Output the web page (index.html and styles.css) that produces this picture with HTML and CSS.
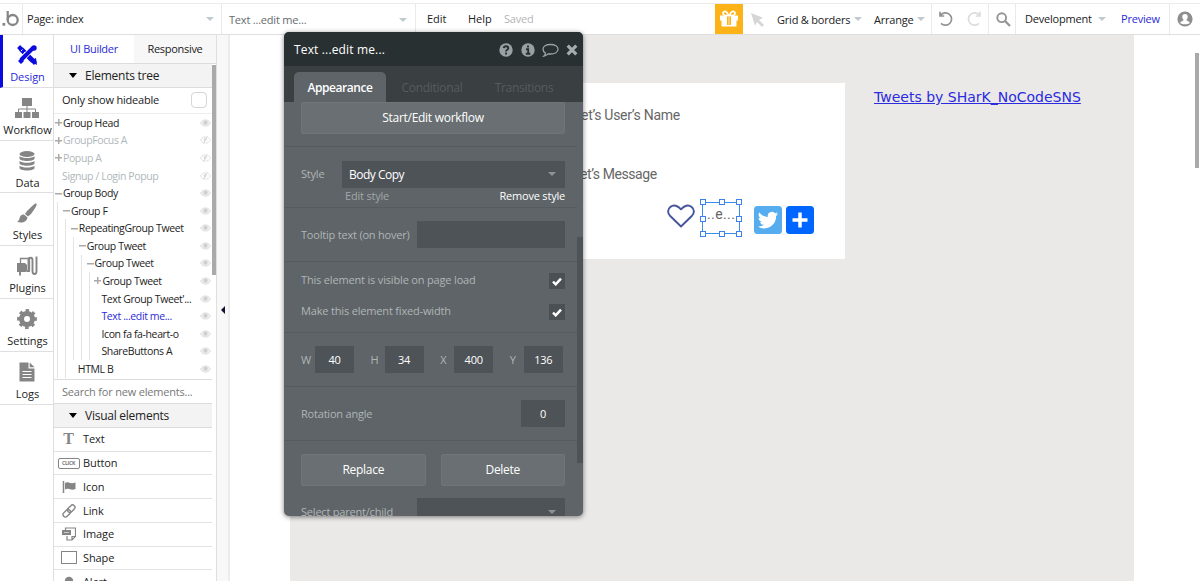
FILE: index.html
```html
<!DOCTYPE html>
<html lang="en">
<head>
<meta charset="utf-8">
<title>Editor</title>
<link rel="stylesheet" href="styles.css">
</head>
<body>
<svg class="defs" width="0" height="0">
  <symbol id="eye" viewBox="0 0 12 8"><path d="M.5 4C2 1.600 3.800.6 6 .6S10 1.600 11.500 4C10 6.400 8.200 7.400 6 7.400S2 6.400.5 4Z" fill="#eee" stroke="#dedede"/><circle cx="6" cy="3.700" r="2.300" fill="#cfcfcf"/></symbol>
  <symbol id="eye-off" viewBox="0 0 12 8"><path d="M.5 4C2 1.600 3.800.6 6 .6S10 1.600 11.500 4C10 6.400 8.200 7.400 6 7.400S2 6.400.5 4Z" fill="none" stroke="#ddd"/><circle cx="6" cy="3.700" r="2" fill="#d4d4d4"/><path d="M8.500 0l-4 8" stroke="#fff" stroke-width="2"/><path d="M8 0l-4 8" stroke="#ccc"/></symbol>
  <symbol id="check" viewBox="0 0 10 9"><path d="M1 4.700 3.700 7.300 9 1.600" fill="none" stroke="#fff" stroke-width="2.500"/></symbol>
</svg>
<div class="app">
  <header class="topbar">
    <div class="cell logo"><svg width="18" height="18" viewBox="0 0 18 18"><rect x=".5" y="13" width="2.700" height="2.700" fill="#858585"/><path d="M5.700 1v9" stroke="#858585" stroke-width="2.200"/><circle cx="10.700" cy="10" r="5" fill="none" stroke="#858585" stroke-width="2.300"/></svg></div>
    <div class="cell page-select"><span>Page: index</span><i class="caret"></i></div>
    <div class="cell element-select"><span>Text ...edit me...</span><i class="caret"></i></div>
    <nav class="menu"><span class="m-edit">Edit</span><span class="m-help">Help</span><span class="m-saved">Saved</span></nav>
    <div class="gift"><svg width="20" height="18" viewBox="0 0 20 18" fill="#fff"><path d="M1 5.500h18v5H1zM2.500 10h15V16.500h-15z"/><path d="M9.500 5.500C5 6 3.500 4.200 4.200 2.500 5.200.5 8 1 9.500 5.500ZM10.500 5.500c4.500.5 6-1.300 5.300-3C14.800.5 12 1 10.500 5.500Z" fill="none" stroke="#fff" stroke-width="1.700"/><path d="M8 6.500h4v8.500H8z" fill="#fbb318"/><path d="M9.200 6.500h1.600v8.500H9.200z" fill="#fdd27a"/></svg></div>
    <svg class="pointer" width="13" height="14" viewBox="0 0 13 14"><path d="M0 0l12 4.700-4 2.300 5 5-2 2-5-5-2 3.700z" fill="#d6d6d6"/></svg>
    <span class="m-grid">Grid &amp; borders</span><i class="caret"></i>
    <span class="m-arrange">Arrange</span><i class="caret"></i>
    <div class="cell history">
      <svg width="16" height="16" viewBox="0 0 16 16" fill="none" stroke="#929292" stroke-width="1.700"><path d="M2.500 4.200A6.200 6.200 0 1 1 3 12.400M2 .8v4.200h4.200"/></svg>
      <svg width="16" height="16" viewBox="0 0 16 16" fill="none" stroke="#dcdcdc" stroke-width="1.700"><path d="M13.500 4.200A6.200 6.200 0 1 0 13 12.400M14 .8v4.200H9.800"/></svg>
    </div>
    <div class="cell search"><svg width="15" height="15" viewBox="0 0 15 15" fill="none" stroke="#949494"><circle cx="5.700" cy="5.700" r="4.400" stroke-width="1.900"/><path d="M9 9l5 5" stroke-width="2.300"/></svg></div>
    <div class="cell version"><span class="m-dev">Development</span><i class="caret"></i><a class="preview">Preview</a></div>
    <div class="user"><svg width="16" height="16" viewBox="0 0 16 16"><circle cx="8" cy="8" r="7.600" fill="#8e8e8e"/><path d="M8 3c1.800 0 2.900 1.200 2.700 3-.1 1.300-.6 2.200-1.300 2.800.2 1.400 3 1.200 3.400 3.200C11 13.700 5 13.700 3.200 12c.4-2 3.200-1.800 3.400-3.200C5.900 8.200 5.400 7.300 5.300 6 5.100 4.200 6.200 3 8 3Z" fill="#fff"/></svg></div>
  </header>

  <div class="workspace">
    <nav class="rail">
      <div class="rail-item active"><svg width="22" height="22" viewBox="0 0 22 22"><path d="M5 5l12 12" stroke="#0b0bdf" stroke-width="5"/><path d="M16.500 4.500 5 16" stroke="#fff" stroke-width="5.500"/><path d="M17 4 5 16" stroke="#0b0bdf" stroke-width="4"/><path d="M2.500 5.500 5.500 2.500M16.500 19.500 19.500 16.500" stroke="#0b0bdf" stroke-width="4"/><path d="M14 17l6-3 1 7zM2 17l3-3 3 3-3 3z" fill="#0b0bdf"/><path d="M5 7l1.500-1.500M7.500 9.500 9 8" stroke="#fff"/><circle cx="18" cy="4" r="2.700" fill="#0b0bdf"/></svg><span>Design</span></div>
      <div class="rail-item"><svg width="24" height="22" viewBox="0 0 24 22" fill="#858585"><path d="M7 1h10v8H7zM0 15h7v6H0zM8.500 15h7v6h-7zM17 15h7v6h-7z"/><path d="M3.500 15v-3h17v3M12 8v7" fill="none" stroke="#858585"/></svg><span>Workflow</span></div>
      <div class="rail-item"><svg width="18" height="22" viewBox="0 0 18 22" fill="#858585"><ellipse cx="9" cy="4" rx="7.500" ry="3"/><path d="M1.500 6.200c3 2.400 12 2.400 15 0v2.500c-1 3-14 3-15 0zM1.500 11c3 2.400 12 2.400 15 0v2.500c-1 3-14 3-15 0zM1.500 15.700c3 2.400 12 2.400 15 0v2.500c-1 3-14 3-15 0z"/></svg><span>Data</span></div>
      <div class="rail-item"><svg width="22" height="22" viewBox="0 0 22 22" fill="#858585"><path d="M20 1.500c1.500.8 1 2-5 10.500l-3 2.500-3-2.500 2-3C18 2.500 19 1.200 20 1.500ZM8.300 12.700l3.200 2.700c-.5 4-5 6.200-10.500 4.300 3-1 2-5 4.200-6.500 1-.7 2-.8 3.100-.5Z"/></svg><span>Styles</span></div>
      <div class="rail-item"><svg width="22" height="22" viewBox="0 0 22 22"><path d="M4.500 3.500h9V16h-9z" fill="none" stroke="#858585" stroke-width="1.300"/><path d="M1 8h8l2 2v5l-2 2H1z" fill="#858585"/><path d="M11 16h1.500V5c0-3 4-3 4 0v11c0 4 4 4 4 0V1.500M4 17v3.500" fill="none" stroke="#858585" stroke-width="1.900"/></svg><span>Plugins</span></div>
      <div class="rail-item"><svg width="22" height="22" viewBox="0 0 22 22"><circle cx="11" cy="11" r="5.500" fill="none" stroke="#858585" stroke-width="5"/><circle cx="11" cy="11" r="8.400" fill="none" stroke="#858585" stroke-width="3" stroke-dasharray="3.300 3.298" transform="rotate(-11 11 11)"/></svg><span>Settings</span></div>
      <div class="rail-item"><svg width="16" height="22" viewBox="0 0 16 22"><path d="M.5 1.500h9v6h6v13H.5z" fill="#858585"/><path d="M10.700 1.500l4.800 4.800h-4.800z" fill="#858585"/><path d="M3.500 10.500h9M3.500 13.500h9M3.500 16.500h9" stroke="#fff"/></svg><span>Logs</span></div>
    </nav>

    <aside class="side">
      <div class="tabs"><span class="tab on">UI Builder</span><span class="tab">Responsive</span></div>
      <div class="side-body">
        <div class="side-list">
          <div class="section-head"><i class="tri"></i>Elements tree</div>
          <div class="hideable"><span>Only show hideable</span><i class="box"></i></div>
          <div class="tree">
            <div class="node"><b class="plus"></b><span>Group Head</span><svg><use href="#eye"/></svg></div>
            <div class="node dim"><b class="plus"></b><span>GroupFocus A</span><svg><use href="#eye-off"/></svg></div>
            <div class="node dim"><b class="plus"></b><span>Popup A</span><svg><use href="#eye-off"/></svg></div>
            <div class="node dim"><b class="leaf"></b><span>Signup / Login Popup</span><svg><use href="#eye-off"/></svg></div>
            <div class="node"><b class="minus"></b><span>Group Body</span><svg><use href="#eye"/></svg></div>
            <div class="node"><u></u><b class="minus"></b><span>Group F</span><svg><use href="#eye"/></svg></div>
            <div class="node"><u></u><u></u><b class="minus"></b><span>RepeatingGroup Tweet</span><svg><use href="#eye"/></svg></div>
            <div class="node"><u></u><u></u><u></u><b class="minus"></b><span>Group Tweet</span><svg><use href="#eye"/></svg></div>
            <div class="node"><u></u><u></u><u></u><u></u><b class="minus"></b><span>Group Tweet</span><svg><use href="#eye"/></svg></div>
            <div class="node"><u></u><u></u><u></u><u></u><u></u><b class="plus"></b><span>Group Tweet</span><svg><use href="#eye"/></svg></div>
            <div class="node"><u></u><u></u><u></u><u></u><u></u><b class="leaf"></b><span>Text Group Tweet'...</span><svg><use href="#eye"/></svg></div>
            <div class="node picked"><u></u><u></u><u></u><u></u><u></u><b class="leaf"></b><span>Text ...edit me...</span><svg><use href="#eye"/></svg></div>
            <div class="node"><u></u><u></u><u></u><u></u><u></u><b class="leaf"></b><span>Icon fa fa-heart-o</span><svg><use href="#eye"/></svg></div>
            <div class="node"><u></u><u></u><u></u><u></u><u></u><b class="leaf"></b><span>ShareButtons A</span><svg><use href="#eye"/></svg></div>
            <div class="node"><u></u><u></u><b class="leaf"></b><span>HTML B</span><svg><use href="#eye"/></svg></div>
          </div>
          <div class="find">Search for new elements...</div>
          <div class="section-head visual"><i class="tri"></i>Visual elements</div>
          <div class="item"><i class="glyph-t">T</i><span>Text</span></div>
          <div class="item"><i class="glyph-click">CLICK</i><span>Button</span></div>
          <div class="item"><svg width="14" height="12" viewBox="0 0 14 12"><path d="M1.500 0v12" stroke="#858585" stroke-width="1.500"/><path d="M3 2c3-2 5 1.500 10.500-.5v6.500C9 10 6.500 6.500 3 8.500z" fill="#858585"/></svg><span>Icon</span></div>
          <div class="item"><svg width="14" height="14" viewBox="0 0 14 14" fill="none" stroke="#858585" stroke-width="1.400"><rect x="5" y="2.300" width="8.500" height="4.800" rx="2.400" transform="rotate(-45 9.200 4.700)"/><rect x=".5" y="6.900" width="8.500" height="4.800" rx="2.400" transform="rotate(-45 4.700 9.300)"/></svg><span>Link</span></div>
          <div class="item"><svg width="14" height="14" viewBox="0 0 14 14"><path d="M3.500 3V1h10v8.500L10 13H5V9M10 13V9.500h3.500" fill="none" stroke="#858585" stroke-width="1.200"/><path d="M0 3h9v5H0z" fill="#858585"/><path d="M2 5.500h5" stroke="#ccc"/></svg><span>Image</span></div>
          <div class="item"><i class="glyph-shape"></i><span>Shape</span></div>
          <div class="item"><svg width="10" height="12" viewBox="0 0 10 12"><circle cx="5" cy="5" r="4.200" fill="#858585"/><path d="M2 8h6v4H2z" fill="#858585"/></svg><span>Alert</span></div>
        </div>
        <div class="track"><i></i></div>
      </div>
    </aside>
    <div class="gutter"><i></i></div>

    <main class="stage">
      <div class="canvas">
        <section class="tweet-card">
          <p class="bound t-name">et’s User’s Name</p>
          <p class="bound t-msg">et’s Message</p>
          <svg class="heart" width="28" height="24" viewBox="0 0 28 24"><path d="M14 22.500 3 11.700C.2 8.700.8 5 3.300 2.900c3.200-2.600 7-1.500 10.700 2.400 3.700-3.900 7.500-5 10.700-2.400 2.500 2.100 3.100 5.800.3 8.800z" fill="none" stroke="#46549c" stroke-width="1.900" stroke-linejoin="round"/></svg>
          <div class="selected"><span>..e...</span><i class="h nw"></i><i class="h n"></i><i class="h ne"></i><i class="h w"></i><i class="h e"></i><i class="h sw"></i><i class="h s"></i><i class="h se"></i></div>
          <div class="share"><svg width="28" height="28" viewBox="0 0 28 28"><rect width="28" height="28" rx="3.500" fill="#55acee"/><path transform="translate(3.800 3.900) scale(.85)" fill="#fff" d="M23.953 4.570a10 10 0 01-2.825.775 4.958 4.958 0 002.163-2.723c-.951.555-2.005.959-3.127 1.184a4.920 4.920 0 00-8.384 4.482C7.690 8.095 4.067 6.130 1.640 3.162a4.822 4.822 0 00-.666 2.475c0 1.710.87 3.213 2.188 4.096a4.904 4.904 0 01-2.228-.616v.06a4.923 4.923 0 003.946 4.827 4.996 4.996 0 01-2.212.085 4.936 4.936 0 004.604 3.417 9.867 9.867 0 01-6.102 2.105c-.39 0-.779-.023-1.170-.067a13.995 13.995 0 007.557 2.209c9.053 0 13.998-7.496 13.998-13.985 0-.21 0-.42-.015-.63A9.935 9.935 0 0024 4.590z"/></svg><svg width="28" height="28" viewBox="0 0 28 28"><rect width="28" height="28" rx="3.500" fill="#0166ff"/><path d="M14 6.500v15M6.500 14h15" stroke="#fff" stroke-width="3.500"/></svg></div>
        </section>
        <a class="timeline">Tweets by SHarK_NoCodeSNS</a>
      </div>
      <div class="stage-scroll"><i></i></div>
    </main>
  </div>
</div>

<div class="editor">
  <div class="ed-head"><span>Text ...edit me...</span>
    <svg width="14" height="14" viewBox="0 0 14 14"><circle cx="7" cy="7" r="6.700" fill="#99a1a4"/><path d="M4.700 5.200C5 2.600 9.300 2.700 9.300 5.200 9.300 6.900 7 6.700 7 8.500M7 9.500v2" fill="none" stroke="#293032" stroke-width="1.900"/></svg>
    <svg width="14" height="14" viewBox="0 0 14 14"><circle cx="7" cy="7" r="6.700" fill="#99a1a4"/><path d="M7 2.500v2M5 6.200h2.200V10.500M4.800 10.700h4.600" fill="none" stroke="#293032" stroke-width="1.900"/></svg>
    <svg class="bubble" width="17" height="14" viewBox="0 0 17 14"><path d="M8.500 1.500C13 1.500 16 3.500 16 6.200S13 11 8.500 11c-.8 0-1.500 0-2.200-.2C5 12 3.500 12.800 2 13c1-.9 1.400-1.800 1.400-3C1.800 9.100 1 7.800 1 6.200 1 3.500 4 1.500 8.500 1.500Z" fill="none" stroke="#99a1a4" stroke-width="1.300"/></svg>
    <svg class="close" width="12" height="12" viewBox="0 0 12 12"><path d="M1.700 1.700l8.600 8.600M10.300 1.700l-8.600 8.600" stroke="#a5acaf" stroke-width="3.200"/></svg>
  </div>
  <div class="ed-tabs"><span class="on">Appearance</span><span>Conditional</span><span>Transitions</span></div>
  <div class="ed-body">
    <div class="ed-content">
      <div class="sec s-flow"><div class="btn">Start/Edit workflow</div></div>
      <div class="sec s-style">
        <div class="row"><label>Style</label><div class="field select">Body Copy<i class="caret"></i></div></div>
        <div class="links"><span class="off">Edit style</span><span>Remove style</span></div>
      </div>
      <div class="sec s-tip"><label>Tooltip text (on hover)</label><div class="field"></div></div>
      <div class="sec s-checks">
        <div class="row"><label>This element is visible on page load</label><div class="chk"><svg width="10" height="9"><use href="#check"/></svg></div></div>
        <div class="row"><label>Make this element fixed-width</label><div class="chk"><svg width="10" height="9"><use href="#check"/></svg></div></div>
      </div>
      <div class="sec s-dims"><label>W</label><div class="field">40</div><label>H</label><div class="field">34</div><label>X</label><div class="field">400</div><label>Y</label><div class="field">136</div></div>
      <div class="sec s-rot"><label>Rotation angle</label><div class="field">0</div></div>
      <div class="s-act"><div class="btn">Replace</div><div class="btn">Delete</div></div>
      <div class="s-parent"><label>Select parent/child</label><div class="field select"><i class="caret"></i></div></div>
    </div>
    <div class="ed-scroll"><i></i></div>
  </div>
</div>
</body>
</html>
```

FILE: styles.css
```css
* { box-sizing: border-box; }
body { margin: 0; width: 1200px; height: 581px; overflow: hidden; background: #fff; color: #222; font: 11px/16px "Open Sans", sans-serif; letter-spacing: -.2px; }
i, b, u { font-style: normal; text-decoration: none; display: block; flex: none; }
svg { display: block; flex: none; }
span, label, a { white-space: nowrap; }
.defs { position: absolute; }
.app { display: flex; flex-direction: column; height: 581px; overflow: hidden; }

/* top bar */
.topbar { display: flex; align-items: center; flex: none; height: 35px; padding-top: 4px; border-bottom: 1px solid #dfdfdf; background: linear-gradient(#fff 3px, #ebebeb 3px, #ebebeb 4px, #fff 4px); }
.cell { display: flex; align-items: center; height: 30px; border-right: 1px solid #e6ebed; flex: none; }
.logo { width: 23px; padding-left: 2px; }
.caret { width: 0; height: 0; border: 4px solid transparent; border-top-color: #c0c9ce; border-bottom: 0; }
.page-select { width: 199px; padding: 0 7px 0 4px; justify-content: space-between; }
.element-select { width: 194px; padding: 1px 8px 0 7px; justify-content: space-between; color: #666b6e; }
.menu { display: flex; width: 299px; padding-left: 11px; letter-spacing: 0; }
.m-edit { width: 41px; }
.m-help { width: 36px; }
.m-saved { color: #b5b5b5; letter-spacing: -.2px; }
.gift { display: flex; align-items: center; justify-content: center; width: 28px; height: 30px; background: #fbb318; }
.pointer { margin: 1px 13px 0 8px; }
.m-grid { width: 77px; }
.m-arrange { width: 43px; margin-left: 12px; }
.m-grid, .m-arrange { padding-top: 1px; }
.history { width: 58px; margin-left: 6px; padding-left: 6px; gap: 12px; border-left: 1px solid #e6ebed; }
.search { width: 27px; padding-left: 7px; }
.version { width: 154px; padding-left: 9px; }
.m-dev { width: 73px; }
.preview { margin-left: 15px; color: #2b2bd6; }
.user { padding-left: 7px; }

.workspace { display: flex; flex: 1; min-height: 0; }

/* left rail */
.rail { width: 54px; flex: none; border-right: 1px solid #dfdfdf; font-size: 11px; letter-spacing: -.05px; }
.rail-item { display: flex; flex-direction: column; align-items: center; height: 52.800px; padding-top: 9px; border-bottom: 1px solid #dfdfdf; }
.rail-item span { line-height: 16px; margin-top: 3px; padding-left: 2px; }
.rail-item.active { border-left: 3px solid #0b0bdf; color: #2b2bd6; }
.rail-item.active span { padding: 0 1px 0 0; }
.rail-item.active svg { margin-right: 3px; }

/* element side panel */
.side { display: flex; flex-direction: column; width: 163px; flex: none; border-right: 1px solid #dfdfdf; }
.tabs { display: flex; flex: none; height: 29px; border-bottom: 1px solid #dcdcdc; letter-spacing: -.3px; }
.tab { width: 82px; line-height: 28px; text-align: center; background: #f7f7f7; }
.tab.on { width: 80px; background: #fff; color: #2b2bd6; }
.side-body { display: flex; flex: 1; min-height: 0; }
.side-list { width: 158px; overflow: hidden; }
.section-head { display: flex; align-items: center; height: 24px; padding-left: 15px; gap: 8px; background: #f3f3f3; border-bottom: 1px solid #dcdcdc; font-size: 12px; letter-spacing: -.25px; }
.tri { width: 0; height: 0; border: 4px solid transparent; border-top: 5px solid #000; border-bottom: 0; }
.hideable { display: flex; align-items: center; justify-content: space-between; height: 26px; padding: 0 5px 1px 8px; border-bottom: 1px solid #eee; }
.box { width: 16px; height: 16px; border: 1px solid #d6d6d6; border-radius: 4px; }
.tree { height: 266px; border-bottom: 1px solid #dcdcdc; }
.node { display: flex; align-items: center; height: 17.580px; font-size: 10.500px; letter-spacing: -.38px; }
.node span { flex: 1; }
.node svg { width: 11px; height: 8px; margin-right: 1px; }
.node u { width: 7.900px; height: 100%; background: linear-gradient(90deg, transparent 3px, #e4e4e4 3px, #e4e4e4 4px, transparent 4px); }
.node b { width: 8px; height: 7px; margin-right: 1px; }
.node .leaf { margin-right: 0; }
.plus { background: linear-gradient(#aaa, #aaa) 1px 3px / 7px 1.500px no-repeat, linear-gradient(#aaa, #aaa) 4px 0 / 1.500px 7px no-repeat; }
.minus { background: linear-gradient(#aaa, #aaa) 1px 3px / 7px 1.500px no-repeat; }
.dim { color: #b0b7ba; }
.picked { color: #2b2bd6; }
.find { height: 24px; padding-left: 8px; line-height: 24px; color: #777; border-bottom: 1px solid #dcdcdc; }
.item { display: grid; grid-template-columns: 29px 1fr; align-items: center; justify-items: center; height: 23.720px; border-bottom: 1px solid #e2e2e2; }
.item span { justify-self: start; letter-spacing: -.1px; }
.glyph-t { font: bold 16px/20px "Liberation Serif", serif; color: #858585; }
.glyph-click { width: 22px; height: 11px; border: 1px solid #858585; border-radius: 2px; font: bold 5px/9px "Open Sans", sans-serif; color: #777; text-align: center; }
.glyph-shape { width: 16px; height: 13px; border: 1px solid #858585; }
.track { width: 4px; padding-top: 1px; }
.track i { height: 210px; background: #aaa; }
.gutter { display: flex; align-items: flex-start; width: 13px; padding: 271px 0 0 4px; flex: none; background: #f8f8f8; border-right: 2px solid #ececec; }
.gutter i { border: 4px solid transparent; border-right-color: #101030; border-left: 0; }

/* canvas */
.stage { display: flex; flex: 1; padding-left: 60px; }
.canvas { position: relative; width: 844px; background: #eae9e7; }
.stage-scroll { margin-left: auto; padding: 18px 1px 0 0; }
.stage-scroll i { width: 4px; height: 115px; background: #aaa; }
.tweet-card { position: absolute; left: 30px; top: 48px; width: 525px; height: 176px; background: #fff; }
.bound { position: absolute; margin: 0; font: 14px/18px Roboto, sans-serif; letter-spacing: -.28px; color: #666; white-space: nowrap; }
.t-name { left: 261px; top: 23px; }
.t-msg { left: 260px; top: 82px; letter-spacing: -.42px; }
.heart { position: absolute; left: 347px; top: 121px; }
.selected { position: absolute; left: 382px; top: 119px; width: 38px; height: 32px; border: 1px solid #3b8ee8; }
.selected span { position: absolute; left: 4px; top: 1px; font: 14px/20px Roboto, sans-serif; color: #666; letter-spacing: .4px; }
.h { position: absolute; width: 6px; height: 6px; background: #fff; border: 1px solid #3b82f0; }
.nw, .n, .ne { top: -4px; }
.w, .e { top: 13px; }
.sw, .s, .se { bottom: -4px; }
.nw, .w, .sw { left: -3px; }
.n, .s { left: 16px; }
.ne, .e, .se { right: -3px; }
.share { position: absolute; left: 434px; top: 123px; display: flex; gap: 4px; }
.timeline { position: absolute; left: 584px; top: 52px; font: 14px/20px "DejaVu Sans", sans-serif; letter-spacing: 0; color: #2b2be0; text-decoration: underline; }

/* floating property editor */
.editor { position: absolute; left: 284px; top: 32px; width: 299px; height: 483.500px; display: flex; flex-direction: column; border-radius: 5px; overflow: hidden; background: #5e6467; box-shadow: 0 1px 5px rgba(0,0,0,.5); color: #fff; }
.ed-head { display: flex; align-items: center; height: 34px; flex: none; padding: 1px 5px 0 10px; background: #293032; font-size: 12px; gap: 8px; letter-spacing: .15px; }
.ed-head span { flex: 1; }
.bubble { margin: 0 -1px 0 -1px; }
.ed-tabs { display: flex; align-items: flex-end; height: 36px; flex: none; padding-left: 10px; background: #3a3f41; font-size: 12px; letter-spacing: -.3px; }
.ed-tabs span { width: 92px; height: 30px; line-height: 31px; text-align: center; color: #565c5f; }
.ed-tabs .on { background: #5e6467; color: #fff; font-weight: 600; border-radius: 5px 5px 0 0; letter-spacing: -.45px; }
.ed-body { display: flex; flex: 1; min-height: 0; }
.ed-content { width: 293px; }
.ed-content label { color: #b0b5b7; }
.ed-scroll { width: 6px; padding-top: 135px; }
.ed-scroll i { height: 226px; background: #4e5357; }
.sec { border-bottom: 1px solid #555b5e; }
.btn { height: 32px; line-height: 30px; text-align: center; background: #696f72; border: 1px solid #707678; border-radius: 2px; font-size: 12px; flex: 1; letter-spacing: -.28px; }
.field { height: 27px; line-height: 27px; background: #4e5357; text-align: center; }
.select { display: flex; align-items: center; padding: 0 9px 0 7px; font-size: 12px; letter-spacing: -.5px; }
.select .caret { border-top-color: #8c9295; margin-left: auto; }
.s-flow { height: 45px; padding: 0 12px 0 17px; }
.s-style { height: 61px; padding: 13.500px 12px 0 17px; }
.row { display: flex; align-items: center; justify-content: space-between; }
.s-style .field { width: 223px; }
.links { display: flex; justify-content: space-between; padding-left: 44px; }
.links span { line-height: 15px; }
.off { color: #a1a7aa; }
.s-tip { display: flex; align-items: center; justify-content: space-between; height: 54px; padding: 0 12px 0 17px; }
.s-tip .field, .s-parent .field { width: 148px; }
.s-checks { height: 71px; padding: 11px 12px 0 17px; }
.s-checks .row { height: 16px; margin-bottom: 15px; }
.s-checks label { letter-spacing: -.17px; padding-bottom: 2px; }
.chk { display: flex; align-items: center; justify-content: center; width: 16px; height: 16px; background: #4b5054; }
.s-dims { display: grid; grid-template-columns: repeat(4, 14px 55.600px); align-items: center; height: 54px; padding-left: 17px; }
.s-dims .field { width: 39px; }
.s-rot { display: flex; align-items: center; justify-content: space-between; height: 54px; padding: 0 12px 0 17px; }
.s-rot .field { width: 44px; }
.s-act { display: flex; gap: 15px; padding: 13px 12px 0 17px; }
.s-parent { display: flex; align-items: center; justify-content: space-between; padding: 12px 12px 0 17px; }
```
